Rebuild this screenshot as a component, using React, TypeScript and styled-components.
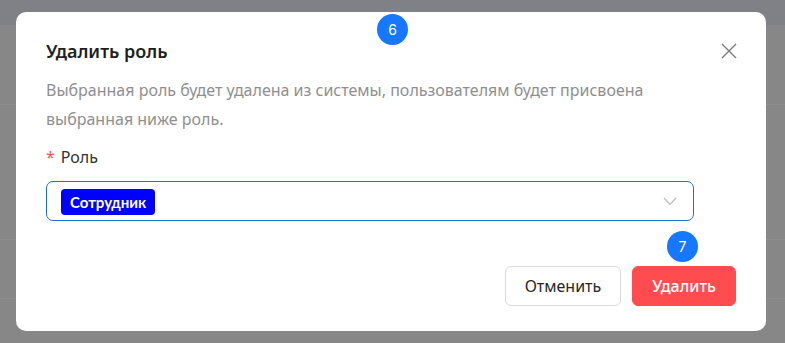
import * as React from 'react';
import styled, { createGlobalStyle } from 'styled-components';

const GlobalStyle = createGlobalStyle`
  html, body {
    margin: 0;
    padding: 0;
    width: 785px;
    height: 343px;
    overflow: hidden;
    font-family: "Noto Sans", "Open Sans", sans-serif;
  }
  * { box-sizing: border-box; }
`;

const Backdrop = styled.div`
  position: relative;
  width: 785px;
  height: 343px;
  background-color: #878787;
  display: flex;
  flex-direction: column;
`;

const PageHeader = styled.div`
  height: 25px;
  background-color: #7f8187;
`;

const PageRow = styled.div<{ $height: number }>`
  height: ${p => p.$height}px;
  border-bottom: 1px solid #8e8e8e;
`;

const Modal = styled.div`
  position: absolute;
  top: 12px;
  left: 16px;
  width: 750px;
  height: 319px;
  background: #fff;
  border-radius: 10px;
  padding: 26px 30px 25px 30px;
  display: flex;
  flex-direction: column;
`;

const Header = styled.div`
  display: flex;
  justify-content: space-between;
  align-items: flex-start;
`;

const Title = styled.h2`
  margin: 0;
  font-size: 18px;
  line-height: 26px;
  font-weight: 600;
  color: #1f1f1f;
`;

const CloseButton = styled.button`
  border: 0;
  background: none;
  padding: 0;
  margin: 2px -4px 0 0;
  width: 22px;
  height: 22px;
  display: flex;
  align-items: center;
  justify-content: center;
  cursor: pointer;
`;

const Description = styled.p`
  margin: 12px 0 0 0;
  font-size: 16px;
  line-height: 29px;
  color: #8f8f8f;
`;

const Label = styled.div`
  margin-top: 11px;
  font-size: 16px;
  line-height: 24px;
  color: #333;
  display: flex;
  gap: 6px;
`;

const Required = styled.span`
  color: #ff4d4f;
`;

const Select = styled.div`
  margin-top: 12px;
  height: 40px;
  width: 648px;
  border: 1px solid #1c6fd0;
  border-radius: 7px;
  display: flex;
  align-items: center;
  justify-content: space-between;
  padding: 0 16px 0 14px;
`;

const Tag = styled.span`
  background: #0000ff;
  color: #fff;
  font-family: "Lato", "Noto Sans", sans-serif;
  font-weight: 700;
  font-size: 15px;
  line-height: 26px;
  padding: 0 9px;
  border-radius: 4px;
  margin-top: 1px;
`;

const Footer = styled.div`
  margin-top: auto;
  display: flex;
  justify-content: flex-end;
  gap: 11px;
`;

const Button = styled.button<{ $danger?: boolean }>`
  height: 40px;
  padding: 0 19px;
  border-radius: 6px;
  font-family: "Noto Sans", sans-serif;
  font-size: 16px;
  border: 1px solid ${p => (p.$danger ? '#ff4d4f' : '#d9d9d9')};
  background: ${p => (p.$danger ? '#ff4d4f' : '#fff')};
  color: ${p => (p.$danger ? '#fff' : '#262626')};
  font-weight: ${p => (p.$danger ? 500 : 400)};
`;

const Badge = styled.div<{ $x: number; $y: number }>`
  position: absolute;
  left: ${p => p.$x}px;
  top: ${p => p.$y}px;
  width: 31px;
  height: 31px;
  border-radius: 50%;
  background: #1677ff;
  color: #fff;
  font-family: "Inter", sans-serif;
  font-size: 14px;
  display: flex;
  align-items: center;
  justify-content: center;
`;

const App = () => (
  <>
    <GlobalStyle />
    <Backdrop>
      <PageHeader />
      <PageRow $height={80} />
      <PageRow $height={135} />
      <PageRow $height={59} />
      <Modal>
        <Header>
          <Title>Удалить роль</Title>
          <CloseButton aria-label="Закрыть">
            <svg width="16" height="16" viewBox="0 0 16 16">
              <path d="M1 1 L15 15 M15 1 L1 15" stroke="#7a7a7a" strokeWidth="1.4" fill="none" />
            </svg>
          </CloseButton>
        </Header>
        <Description>
          Выбранная роль будет удалена из системы, пользователям будет присвоена
          <br />
          выбранная ниже роль.
        </Description>
        <Label>
          <Required>*</Required>
          Роль
        </Label>
        <Select>
          <Tag>Сотрудник</Tag>
          <svg width="14" height="9" viewBox="0 0 14 9">
            <path d="M1 1 L7 7.5 L13 1" stroke="#bfbfbf" strokeWidth="1.3" fill="none" />
          </svg>
        </Select>
        <Footer>
          <Button>Отменить</Button>
          <Button $danger>Удалить</Button>
        </Footer>
      </Modal>
      <Badge $x={377} $y={14}>6</Badge>
      <Badge $x={667} $y={231}>7</Badge>
    </Backdrop>
  </>
);

export default App;
